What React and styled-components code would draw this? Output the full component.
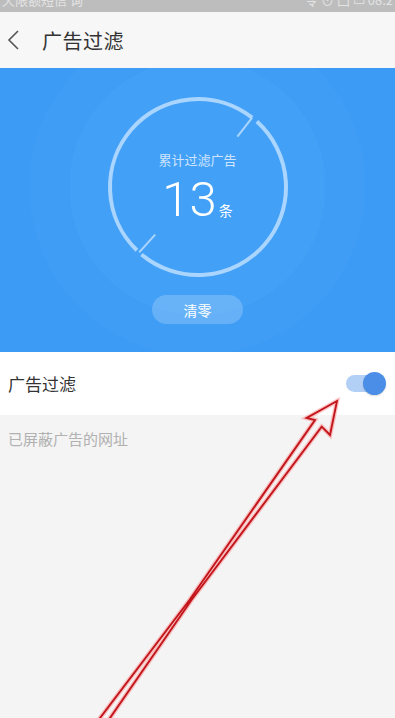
import React from "react";
import styled, { createGlobalStyle } from "styled-components";

const GlobalStyle = createGlobalStyle`
	html, body {
		margin: 0;
		padding: 0;
		background: #f4f4f4;
	}
	body {
		font-family: "Noto Sans CJK SC", "Noto Sans", Roboto, sans-serif;
	}
`;

const Page = styled.div`
	position: relative;
	width: 395px;
	min-height: 718px;
	display: flex;
	flex-direction: column;
	background: #f4f4f4;
	overflow: hidden;
`;

const StatusBar = styled.div`
	height: 12px;
	background: #bdbdbd;
	overflow: hidden;
	display: flex;
	justify-content: space-between;
	padding: 0 2px;
	color: rgba(255, 255, 255, 0.6);
	font-size: 13px;
	line-height: 13px;
`;

const StatusText = styled.span`
	margin-top: -7px;
`;

const Header = styled.div`
	height: 56px;
	background: #f7f7f7;
	display: flex;
	align-items: center;
	padding-left: 7px;
	gap: 21px;
`;

const Title = styled.div`
	font-size: 20px;
	color: #333;
	letter-spacing: 0.5px;
`;

const Hero = styled.div`
	height: 284px;
	display: flex;
	flex-direction: column;
	align-items: center;
	box-sizing: border-box;
	padding-top: 24px;
	background: radial-gradient(
		circle at 50% 119px,
		#43a0f7 0 128px,
		#3f9df5 128px 168px,
		#3c9bf4 168px
	);
`;

const Dial = styled.div`
	width: 190px;
	height: 190px;
	display: grid;
	& > * {
		grid-area: 1 / 1;
	}
`;

const DialText = styled.div`
	display: flex;
	flex-direction: column;
	align-items: center;
	padding-top: 59px;
`;

const DialLabel = styled.div`
	font-size: 13px;
	line-height: 18px;
	color: #cfe5ff;
`;

const Count = styled.div`
	display: flex;
	align-items: baseline;
	margin-top: 6px;
	color: #fff;
`;

const Number = styled.span`
	font-family: Roboto, "Noto Sans", sans-serif;
	font-weight: 300;
	font-size: 49px;
	line-height: 50px;
`;

const Unit = styled.span`
	font-size: 14px;
	margin-left: 2px;
`;

const ClearButton = styled.button`
	margin-top: 13px;
	width: 91px;
	height: 29px;
	border: none;
	border-radius: 15px;
	background: rgba(255, 255, 255, 0.2);
	color: #fff;
	font-family: inherit;
	font-size: 14px;
	padding: 0;
`;

const Row = styled.div`
	height: 63px;
	background: #fff;
	display: flex;
	align-items: center;
	justify-content: space-between;
	padding: 0 9px 0 8px;
`;

const RowLabel = styled.div`
	font-size: 17px;
	color: #333;
`;

const Toggle = styled.div`
	width: 40px;
	height: 23px;
	display: flex;
	align-items: center;
	justify-content: flex-end;
	position: relative;
`;

const Track = styled.div`
	position: absolute;
	left: 0;
	top: 3px;
	width: 34px;
	height: 17px;
	border-radius: 9px;
	background: #b2cff6;
`;

const Knob = styled.div`
	position: relative;
	width: 23px;
	height: 23px;
	border-radius: 50%;
	background: #4a8ee7;
	box-shadow: 0 1px 2px rgba(0, 0, 0, 0.15);
`;

const Section = styled.div`
	padding: 14px 8px;
	font-size: 15px;
	line-height: 20px;
	color: #b1b1b1;
`;

const Overlay = styled.svg`
	position: absolute;
	left: 0;
	top: 0;
	pointer-events: none;
`;

function BackIcon() {
	return (
		<svg width="14" height="22" viewBox="0 0 14 22">
			<polyline points="11,2 2,11 11,20" fill="none" stroke="#555" strokeWidth="1.6" />
		</svg>
	);
}

function Ring() {
	const c = 95;
	const r = 88;
	const pt = (deg, rad) => {
		const a = (deg * Math.PI) / 180;
		return [c + rad * Math.cos(a), c + rad * Math.sin(a)];
	};
	const arc = (from, to) => {
		const [x1, y1] = pt(from, r);
		const [x2, y2] = pt(to, r);
		const large = to - from > 180 ? 1 : 0;
		return `M${x1} ${y1} A${r} ${r} 0 ${large} 1 ${x2} ${y2}`;
	};
	const tick = (deg) => {
		const [x1, y1] = pt(deg, r);
		const [x2, y2] = pt(deg, r - 24);
		return <line x1={x1} y1={y1} x2={x2} y2={y2} />;
	};
	return (
		<svg width="190" height="190" viewBox="0 0 190 190">
			<g fill="none" stroke="#a9d5ff" strokeWidth="4" strokeLinecap="butt">
				<path d={arc(-48, 130)} />
				<path d={arc(134, 308)} />
			</g>
			<g stroke="#a9d5ff" strokeWidth="2">
				{tick(-52)}
				{tick(132)}
			</g>
		</svg>
	);
}

function Arrow() {
	const pts =
		"337,401 330,435 321.7,426.7 191.5,600 101.7,730 90.9,730 189.5,600 315,420 306.7,418";
	return (
		<Overlay width="395" height="718" viewBox="0 0 395 718">
			<polygon points={pts} fill="none" stroke="rgba(255,90,90,0.35)" strokeWidth="4.5" />
			<polygon points={pts} fill="none" stroke="#c2161c" strokeWidth="1.9" />
		</Overlay>
	);
}

export default function App() {
	return (
		<>
			<GlobalStyle />
			<Page>
				<StatusBar>
					<StatusText>天限额短信 询</StatusText>
					<StatusText>令 ⊙ 凸 ▭ 08:2</StatusText>
				</StatusBar>
				<Header>
					<BackIcon />
					<Title>广告过滤</Title>
				</Header>
				<Hero>
					<Dial>
						<Ring />
						<DialText>
							<DialLabel>累计过滤广告</DialLabel>
							<Count>
								<Number>13</Number>
								<Unit>条</Unit>
							</Count>
						</DialText>
					</Dial>
					<ClearButton>清零</ClearButton>
				</Hero>
				<Row>
					<RowLabel>广告过滤</RowLabel>
					<Toggle>
						<Track />
						<Knob />
					</Toggle>
				</Row>
				<Section>已屏蔽广告的网址</Section>
				<Arrow />
			</Page>
		</>
	);
}
